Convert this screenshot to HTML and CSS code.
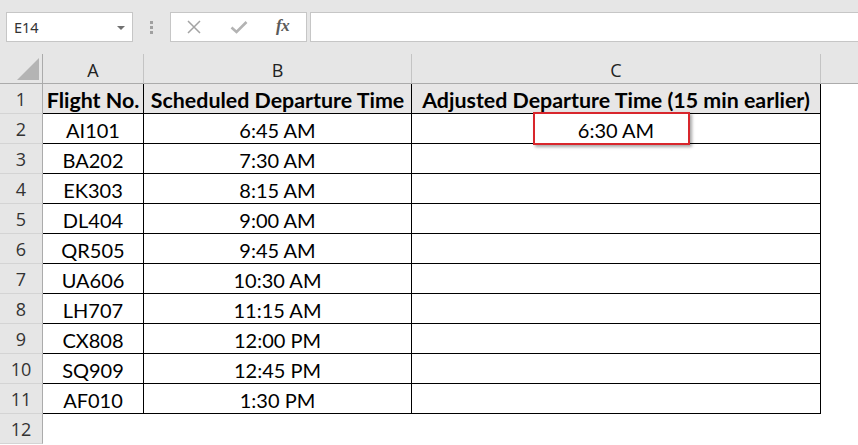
FILE: index.html
```html
<!DOCTYPE html>
<html>
<head>
<meta charset="utf-8">
<link rel="stylesheet" href="styles.css">
</head>
<body>
<div class="toolbar">
  <div class="namebox"><span class="ref">E14</span><span class="caret"></span></div>
  <div class="grip"><i></i><i></i><i></i></div>
  <div class="fbtns">
    <svg class="ico" width="16" height="14" viewBox="0 0 16 14"><path d="M2 1 L14 13 M14 1 L2 13" stroke="#a3a3a3" stroke-width="1.5" fill="none"/></svg>
    <svg class="ico" width="18" height="14" viewBox="0 0 18 14"><path d="M1.5 7.5 L6.5 12 L16.5 2" stroke="#b3b3b3" stroke-width="2.6" fill="none"/></svg>
    <span class="fx">fx</span>
  </div>
  <div class="finput"></div>
</div>
<div class="sheet">
  <div class="corner"><span class="tri"></span></div>
  <div class="ch">A</div>
  <div class="ch">B</div>
  <div class="ch">C</div>
  <div class="ch last"></div>

  <div class="rh">1</div>
  <div class="c hd">Flight No.</div>
  <div class="c hd">Scheduled Departure Time</div>
  <div class="c hd">Adjusted Departure Time (15 min earlier)</div>
  <div class="e"></div>

  <div class="rh">2</div>
  <div class="c">AI101</div>
  <div class="c">6:45 AM</div>
  <div class="c">6:30 AM</div>
  <div class="e"></div>

  <div class="rh">3</div>
  <div class="c">BA202</div>
  <div class="c">7:30 AM</div>
  <div class="c"></div>
  <div class="e"></div>

  <div class="rh">4</div>
  <div class="c">EK303</div>
  <div class="c">8:15 AM</div>
  <div class="c"></div>
  <div class="e"></div>

  <div class="rh">5</div>
  <div class="c">DL404</div>
  <div class="c">9:00 AM</div>
  <div class="c"></div>
  <div class="e"></div>

  <div class="rh">6</div>
  <div class="c">QR505</div>
  <div class="c">9:45 AM</div>
  <div class="c"></div>
  <div class="e"></div>

  <div class="rh">7</div>
  <div class="c">UA606</div>
  <div class="c">10:30 AM</div>
  <div class="c"></div>
  <div class="e"></div>

  <div class="rh">8</div>
  <div class="c">LH707</div>
  <div class="c">11:15 AM</div>
  <div class="c"></div>
  <div class="e"></div>

  <div class="rh">9</div>
  <div class="c">CX808</div>
  <div class="c">12:00 PM</div>
  <div class="c"></div>
  <div class="e"></div>

  <div class="rh">10</div>
  <div class="c">SQ909</div>
  <div class="c">12:45 PM</div>
  <div class="c"></div>
  <div class="e"></div>

  <div class="rh">11</div>
  <div class="c">AF010</div>
  <div class="c">1:30 PM</div>
  <div class="c"></div>
  <div class="e"></div>

  <div class="rh">12</div>
  <div class="e"></div>
  <div class="e"></div>
  <div class="e"></div>
  <div class="e"></div>

  <div class="highlight"></div>
</div>
</body>
</html>
```

FILE: styles.css
```css
* { box-sizing: border-box; }
html, body { margin: 0; padding: 0; background: #fff; overflow: hidden; }
body { width: 858px; height: 445px; font-family: "Lato", "Open Sans", sans-serif; color: #000; }

.toolbar {
  height: 54px;
  background: #e6e6e6;
  display: flex;
  align-items: flex-start;
  padding: 12px 0 0 6px;
}
.namebox {
  width: 127px;
  height: 30px;
  background: #fff;
  border: 1px solid #c6c6c6;
  display: flex;
  align-items: center;
  justify-content: space-between;
  padding: 0 7px 0 7px;
  font-family: "Noto Sans", sans-serif;
  font-size: 14.5px;
  color: #333;
}
.caret {
  width: 0; height: 0;
  border-left: 4px solid transparent;
  border-right: 4px solid transparent;
  border-top: 4px solid #707070;
  margin-top: 1px;
}
.grip {
  width: 37px;
  height: 30px;
  display: flex;
  flex-direction: column;
  align-items: center;
  justify-content: center;
  gap: 2px;
}
.grip i { display: block; width: 3px; height: 3px; background: #a0a0a0; }
.fbtns {
  width: 137px;
  height: 30px;
  background: #fff;
  border: 1px solid #c6c6c6;
  display: flex;
  align-items: center;
  padding-left: 15px;
  gap: 0;
}
.ico { display: block; }
.fbtns .ico:first-child { margin-right: 28px; }
.fbtns .ico:nth-child(2) { margin-right: 28px; }
.fx {
  font-family: "Liberation Serif", "DejaVu Serif", serif;
  font-style: italic;
  font-weight: bold;
  font-size: 17px;
  color: #5a5a5a;
  letter-spacing: -0.5px;
  margin-top: -2px;
}
.finput {
  flex: 1;
  height: 30px;
  margin-left: 3px;
  background: #fff;
  border: 1px solid #c6c6c6;
  border-right: none;
}

.sheet {
  position: relative;
  display: grid;
  grid-template-columns: 43px 101px 268px 409px 1fr;
  grid-template-rows: repeat(13, 30px);
}
.corner, .ch {
  background: #e6e6e6;
  border-bottom: 1px solid #ababab;
  border-right: 1px solid #c4c4c4;
}
.corner { border-right-color: #ababab; position: relative; }
.tri {
  position: absolute;
  right: 3px;
  bottom: 3px;
  width: 0; height: 0;
  border-left: 22px solid transparent;
  border-bottom: 22px solid #b4b4b4;
}
.ch {
  display: flex;
  align-items: center;
  justify-content: center;
  font-family: "Open Sans", sans-serif;
  font-size: 18px;
  color: #222;
  padding-top: 2px;
}
.ch.last { border-right: none; }
.rh {
  background: #e6e6e6;
  border-right: 1px solid #ababab;
  border-bottom: 1px solid #d4d4d4;
  display: flex;
  align-items: center;
  justify-content: center;
  font-family: "Open Sans", sans-serif;
  font-size: 18px;
  color: #333;
  padding-top: 1px;
}
.c {
  border-right: 1px solid #000;
  border-bottom: 1px solid #000;
  display: flex;
  align-items: center;
  justify-content: center;
  font-size: 20px;
  white-space: nowrap;
  padding-top: 2px;
}
.c.hd {
  background: #e7e6e6;
  font-weight: bold;
  font-size: 21.4px;
}
.e { background: #fff; }

.highlight {
  position: absolute;
  left: 533px;
  top: 58px;
  width: 157px;
  height: 33px;
  border: 2px solid #d8262c;
  box-shadow: 2px 2px 3px rgba(0,0,0,0.35);
  pointer-events: none;
}
```
